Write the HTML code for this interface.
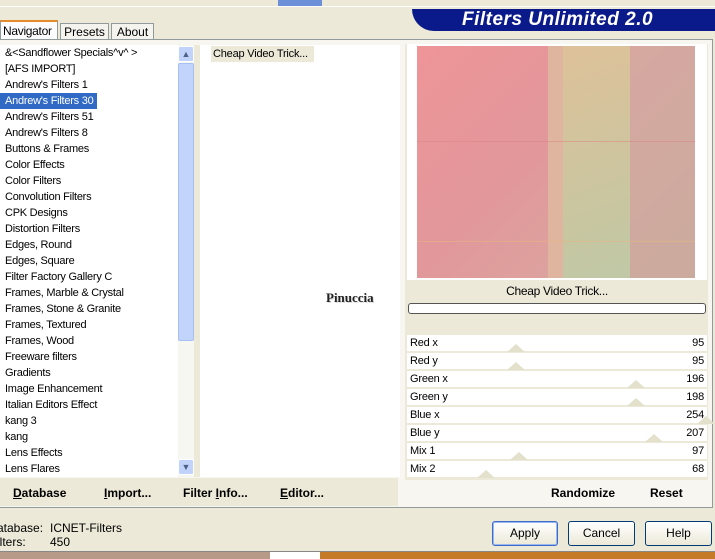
<!DOCTYPE html>
<html><head><style>
*{margin:0;padding:0;box-sizing:border-box}
body{width:715px;height:559px;overflow:hidden;background:#ece9d8;font-family:"Liberation Sans",sans-serif;font-size:11px;color:#000;position:relative}
.a{position:absolute}
.list div{height:16px;line-height:16px;padding-left:5px;white-space:nowrap;letter-spacing:-0.25px}
.sel{background:#316ac5;color:#fff;width:97px}
.row{position:absolute;left:407px;width:300px;height:16px;background:#fff;line-height:16px;letter-spacing:-0.2px}
.row .l{position:absolute;left:3px}
.row .r{position:absolute;right:3px}
.tri{position:absolute;top:9px;width:0;height:0;border-left:9px solid transparent;border-right:9px solid transparent;border-bottom:8px solid #e3e0cc}
.btn{position:absolute;top:521px;height:25px;border:1px solid #003c74;border-radius:3px;background:linear-gradient(#fff,#ece9d8);text-align:center;line-height:23px;font-size:12px}
.bb{position:absolute;top:486px;font-size:12px;font-weight:bold}
</style></head><body>
<div class="a" style="left:0;top:0;width:715px;height:7px;background:#ece9d8;border-bottom:1px solid #fff"></div>
<div class="a" style="left:278px;top:0;width:44px;height:6px;background:#6d8fd8"></div>
<div class="a" style="left:412px;top:9px;width:303px;height:22px;background:#0a1a8a;border-bottom-left-radius:22px"></div>
<div class="a" style="left:462px;top:9px;color:#fff;font-size:19px;font-weight:bold;font-style:italic;letter-spacing:0.5px">Filters Unlimited 2.0</div>
<div class="a" style="left:0;top:20px;width:58px;height:20px;background:#fcfcfe;border:1px solid #919b9c;border-bottom:none;border-top:2px solid #e68b2c;padding:2px 0 0 2px;font-size:12px;letter-spacing:-0.3px">Navigator</div>
<div class="a" style="left:60px;top:23px;width:49px;height:17px;border:1px solid #919b9c;border-bottom:none;background:#f4f3ee;text-align:center;line-height:16px;font-size:12px">Presets</div>
<div class="a" style="left:111px;top:23px;width:43px;height:17px;border:1px solid #919b9c;border-bottom:none;background:#f4f3ee;text-align:center;line-height:16px;font-size:12px">About</div>
<div class="a" style="left:0;top:39px;width:713px;height:469px;border:1px solid #919b9c;border-left:none;background:#f7f6f1"></div>
<div class="a list" style="left:0;top:45px;width:178px;height:432px;background:#fff;overflow:hidden">
<div>&amp;&lt;Sandflower Specials^v^ &gt;</div><div>[AFS IMPORT]</div><div>Andrew's Filters 1</div><div class="sel">Andrew's Filters 30</div><div>Andrew's Filters 51</div><div>Andrew's Filters 8</div><div>Buttons &amp; Frames</div><div>Color Effects</div><div>Color Filters</div><div>Convolution Filters</div><div>CPK Designs</div><div>Distortion Filters</div><div>Edges, Round</div><div>Edges, Square</div><div>Filter Factory Gallery C</div><div>Frames, Marble &amp; Crystal</div><div>Frames, Stone &amp; Granite</div><div>Frames, Textured</div><div>Frames, Wood</div><div>Freeware filters</div><div>Gradients</div><div>Image Enhancement</div><div>Italian Editors Effect</div><div>kang 3</div><div>kang</div><div>Lens Effects</div><div>Lens Flares</div>
</div>
<div class="a" style="left:178px;top:45px;width:16px;height:432px;background:#f7f7f2"></div>
<div class="a" style="left:178px;top:46px;width:16px;height:16px;background:#c1d3fb;border:1px solid #fff;border-radius:2px;text-align:center;font-size:9px;line-height:14px;color:#4d6185">&#9650;</div>
<div class="a" style="left:178px;top:63px;width:16px;height:278px;background:#c2d4fb;border:1px solid #a6bff4;border-radius:2px"></div>
<div class="a" style="left:178px;top:459px;width:16px;height:16px;background:#c1d3fb;border:1px solid #fff;border-radius:2px;text-align:center;font-size:9px;line-height:14px;color:#4d6185">&#9660;</div>
<div class="a" style="left:194px;top:45px;width:6px;height:432px;background:#ece9d8"></div>
<div class="a" style="left:200px;top:45px;width:200px;height:432px;background:#fff"></div>
<div class="a" style="left:211px;top:46px;width:103px;height:16px;background:#ece9d8;line-height:16px;padding-left:2px;font-size:11px;letter-spacing:-0.2px">Cheap Video Trick...</div>
<div class="a" style="left:326px;top:290px;font-family:'Liberation Serif',serif;font-weight:bold;font-size:13px;color:#222;text-shadow:1px 1px 0 #ddd">Pinuccia</div>
<div class="a" style="left:405px;top:44px;width:303px;height:436px;background:#ece9d8"></div>
<div class="a" style="left:407px;top:44px;width:300px;height:236px;background:#fff"></div>
<div class="a" style="left:417px;top:46px;width:131px;height:232px;background:linear-gradient(135deg,#ee9598,#e2979a 60%,#dca29e)"></div>
<div class="a" style="left:548px;top:46px;width:15px;height:232px;background:#e0b5a0"></div>
<div class="a" style="left:563px;top:46px;width:67px;height:232px;background:linear-gradient(160deg,#dec19a,#c8c6a0 70%,#c0c8a6)"></div>
<div class="a" style="left:630px;top:46px;width:65px;height:232px;background:linear-gradient(135deg,#d6a8a0,#cbaa9e)"></div>
<div class="a" style="left:417px;top:141px;width:278px;height:1px;background:rgba(220,130,130,0.5)"></div>
<div class="a" style="left:417px;top:241px;width:278px;height:1px;background:rgba(230,180,130,0.6)"></div>
<div class="a" style="left:407px;top:284px;width:300px;text-align:center;font-size:12px;letter-spacing:-0.3px">Cheap Video Trick...</div>
<div class="a" style="left:408px;top:303px;width:298px;height:11px;border:1px solid #555;border-radius:3px;background:#fff"></div>
<div class="row" style="top:335px"><span class="l">Red x</span><span class="r">95</span><div class="tri" style="left:100px"></div></div>
<div class="row" style="top:353px"><span class="l">Red y</span><span class="r">95</span><div class="tri" style="left:100px"></div></div>
<div class="row" style="top:371px"><span class="l">Green x</span><span class="r">196</span><div class="tri" style="left:220px"></div></div>
<div class="row" style="top:389px"><span class="l">Green y</span><span class="r">198</span><div class="tri" style="left:220px"></div></div>
<div class="row" style="top:407px"><span class="l">Blue x</span><span class="r">254</span><div class="tri" style="left:290px"></div></div>
<div class="row" style="top:425px"><span class="l">Blue y</span><span class="r">207</span><div class="tri" style="left:238px"></div></div>
<div class="row" style="top:443px"><span class="l">Mix 1</span><span class="r">97</span><div class="tri" style="left:103px"></div></div>
<div class="row" style="top:461px"><span class="l">Mix 2</span><span class="r">68</span><div class="tri" style="left:70px"></div></div>
<div class="a" style="left:0;top:478px;width:398px;height:28px;background:#ece9d8"></div>
<div class="bb" style="left:13px"><u>D</u>atabase</div>
<div class="bb" style="left:104px"><u>I</u>mport...</div>
<div class="bb" style="left:183px">Filter <u>I</u>nfo...</div>
<div class="bb" style="left:280px"><u>E</u>ditor...</div>
<div class="bb" style="left:551px">Randomize</div>
<div class="bb" style="left:650px">Reset</div>
<div class="a" style="left:0;top:510px;width:715px;height:41px;background:#ece9d8"></div>
<div class="a" style="left:-3px;top:521px;font-size:12px;line-height:14px">atabase:<br>ilters:</div>
<div class="a" style="left:50px;top:521px;font-size:12px;line-height:14px">ICNET-Filters<br>450</div>
<div class="btn" style="left:492px;width:66px;border-color:#3c6bc8;box-shadow:inset 0 0 0 1px #9bb7ef">Apply</div>
<div class="btn" style="left:568px;width:67px">Cancel</div>
<div class="btn" style="left:645px;width:67px">Help</div>
<div class="a" style="left:0;top:551px;width:715px;height:1px;background:#888"></div>
<div class="a" style="left:0;top:552px;width:270px;height:7px;background:#b89a88"></div>
<div class="a" style="left:270px;top:552px;width:50px;height:7px;background:#fff"></div>
<div class="a" style="left:320px;top:552px;width:395px;height:7px;background:#c47a26"></div>
</body></html>
